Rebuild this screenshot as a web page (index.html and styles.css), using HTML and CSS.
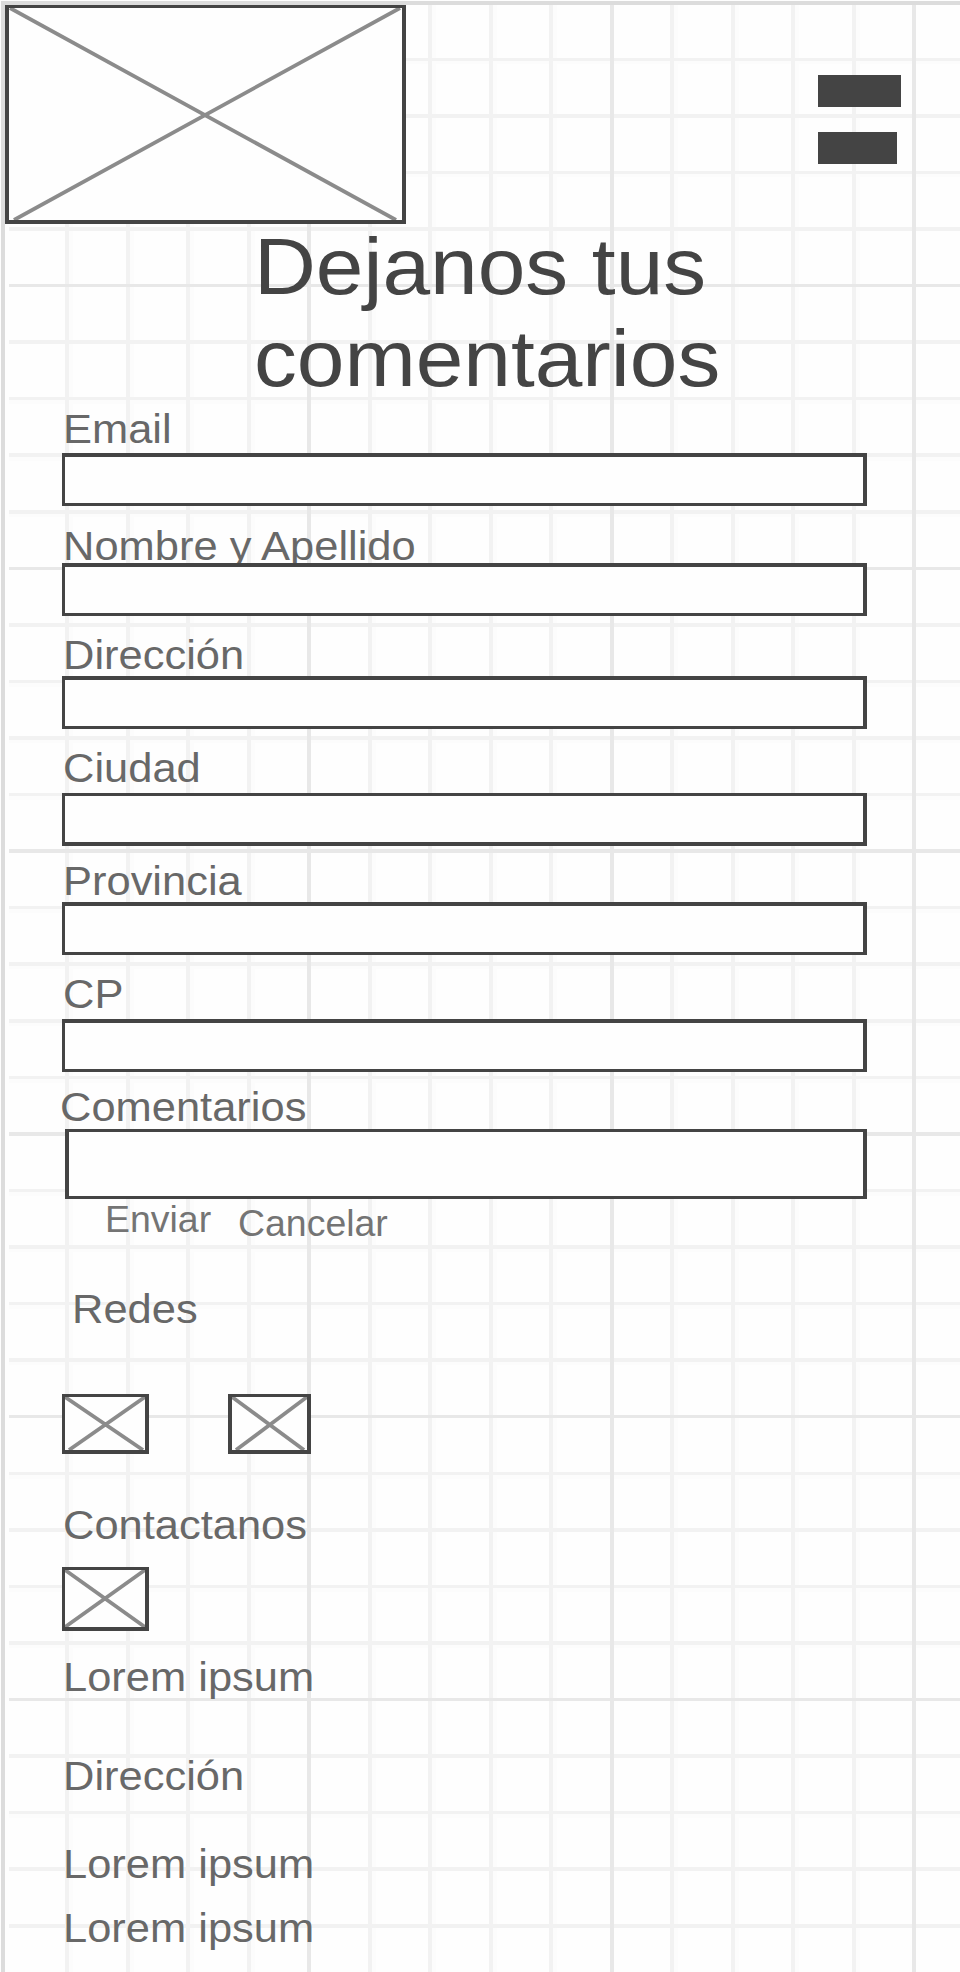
FILE: index.html
```html
<!DOCTYPE html>
<html lang="es">
<head>
<meta charset="utf-8">
<title>Dejanos tus comentarios</title>
<link rel="stylesheet" href="styles.css">
</head>
<body>
<div class="page">
  <svg class="grid" width="960" height="1972" viewBox="0 0 960 1972" shape-rendering="crispEdges" aria-hidden="true">
    <path class="halo" d="M69 5h4v1967h-4zM130 5h4v1967h-4zM190 5h4v1967h-4zM251 5h4v1967h-4zM372 5h4v1967h-4zM432 5h4v1967h-4zM493 5h4v1967h-4zM553 5h4v1967h-4zM674 5h4v1967h-4zM735 5h4v1967h-4zM795 5h4v1967h-4zM856 5h4v1967h-4z"/>
    <path class="halo" d="M9 61h951v3H9zM9 174h951v3H9zM9 400h951v4H9zM9 457h951v4H9zM9 514h951v3H9zM9 683h951v4H9zM9 740h951v3H9zM9 796h951v4H9zM9 909h951v4H9zM9 966h951v3H9zM9 1023h951v3H9zM9 1079h951v4H9zM9 1192h951v4H9zM9 1249h951v3H9zM9 1305h951v4H9zM9 1362h951v3H9zM9 1475h951v4H9zM9 1588h951v4H9zM9 1645h951v3H9zM9 1814h951v4H9z"/>
    <path class="minor" d="M65 5h4v1967h-4zM126 5h4v1967h-4zM186 5h4v1967h-4zM247 5h4v1967h-4zM368 5h4v1967h-4zM428 5h4v1967h-4zM489 5h4v1967h-4zM549 5h4v1967h-4zM670 5h4v1967h-4zM731 5h4v1967h-4zM791 5h4v1967h-4zM852 5h4v1967h-4z"/>
    <path class="minor" d="M9 58h951v3H9zM9 114h951v4H9zM9 171h951v3H9zM9 227h951v4H9zM9 340h951v4H9zM9 397h951v3H9zM9 453h951v4H9zM9 510h951v4H9zM9 623h951v4H9zM9 680h951v3H9zM9 736h951v4H9zM9 793h951v3H9zM9 906h951v3H9zM9 962h951v4H9zM9 1019h951v4H9zM9 1076h951v3H9zM9 1189h951v3H9zM9 1245h951v4H9zM9 1302h951v3H9zM9 1358h951v4H9zM9 1472h951v3H9zM9 1528h951v4H9zM9 1585h951v3H9zM9 1641h951v4H9zM9 1754h951v4H9zM9 1811h951v3H9zM9 1867h951v4H9zM9 1924h951v4H9z"/>
    <path class="major" d="M9 284h951v3H9zM9 567h951v3H9zM9 849h951v4H9zM9 1132h951v4H9zM9 1415h951v3H9zM9 1698h951v3H9zM307 5h4v1967h-4zM610 5h4v1967h-4zM912 5h4v1967h-4z"/>
    <path class="frame" d="M1 1h959v4H5v1967H1z"/>
  </svg>

  <header class="header">
    <div class="image logo"><svg viewBox="0 0 393 212" preserveAspectRatio="none"><path d="M1 0L387 212M391 0L5 212"/></svg></div>
    <div class="menu"><span class="bar"></span><span class="bar bar-short"></span></div>
  </header>

  <h1 class="title">Dejanos tus<br>comentarios</h1>

  <form class="form">
    <div class="field email"><label class="text">Email</label><div class="box"></div></div>
    <div class="field nombre"><label class="text">Nombre y Apellido</label><div class="box"></div></div>
    <div class="field direccion"><label class="text">Dirección</label><div class="box"></div></div>
    <div class="field ciudad"><label class="text">Ciudad</label><div class="box box-low"></div></div>
    <div class="field provincia"><label class="text">Provincia</label><div class="box"></div></div>
    <div class="field cp"><label class="text">CP</label><div class="box"></div></div>
    <div class="field comentarios"><label class="text">Comentarios</label><div class="box box-area"></div></div>
    <div class="actions"><span class="action">Enviar</span><span class="action cancel">Cancelar</span></div>
  </form>

  <footer class="footer">
    <div class="text redes">Redes</div>
    <div class="socials">
      <div class="image"><svg viewBox="0 0 80 53" preserveAspectRatio="none"><path d="M0 0L78 53M80 0L4 53"/></svg></div>
      <div class="image second"><svg viewBox="0 0 75 53" preserveAspectRatio="none"><path d="M0 0L72 53M75 0L4 53"/></svg></div>
    </div>
    <div class="text contact">Contactanos</div>
    <div class="image mail"><svg viewBox="0 0 80 57" preserveAspectRatio="none"><path d="M0 0L80 57M80 0L0 57"/></svg></div>
    <div class="text phone">Lorem ipsum</div>
    <div class="text address">Dirección</div>
    <div class="text line-one">Lorem ipsum</div>
    <div class="text line-two">Lorem ipsum</div>
  </footer>
</div>
</body>
</html>
```

FILE: styles.css
```css
* { box-sizing: border-box; }

body {
  margin: 0;
  background: #fefefe;
  font-family: "Liberation Sans", Arial, sans-serif;
  color: #444;
}

.page {
  position: relative;
  width: 960px;
  height: 1972px;
  overflow: hidden;
  padding-top: 5px;
}

/* Canvas grid behind the content */
.grid { position: absolute; left: 0; top: 0; z-index: -1; }
.halo { fill: #fcfcfc; }
.minor { fill: #f2f2f2; }
.major { fill: #e8e8e8; }
.frame { fill: #dcdcdc; }

.header {
  display: flex;
  justify-content: space-between;
  align-items: flex-start;
  height: 215px;
  padding: 0 59px 0 5px;
}

.image {
  width: 87px;
  height: 60px;
  border: solid #444;
  border-width: 3px 4px 4px 3px;
  background: #fefefe;
}
.image svg { display: block; width: 100%; height: 100%; }
.image path { fill: none; stroke: #444; stroke-opacity: .62; stroke-width: 3.8; }

.logo { width: 401px; height: 219px; border-left-width: 4px; }

.menu {
  display: flex;
  flex-direction: column;
  gap: 25px;
  width: 83px;
  padding-top: 70px;
}
.bar { height: 32px; background: #444; }
.bar-short { width: 79px; }

.title {
  width: 500px;
  height: 184px;
  margin: 1px 0 -1px 254px;
  font-size: 80px;
  font-weight: 400;
  line-height: 92px;
  transform: scaleX(1.07);
  transform-origin: left;
}

.form { padding: 2px 93px 0 62px; }

.text {
  display: block;
  width: max-content;
  height: 46px;
  margin-left: 1px;
  font-size: 41px;
  line-height: 46px;
  white-space: nowrap;
  color: #686868;
  transform: scaleX(1.06);
  transform-origin: left;
}

.field .text { height: 40px; }

.box {
  position: relative;
  z-index: 1;
  height: 53px;
  border: solid #444;
  border-width: 4px 4px 3px 3px;
  background: #fefefe;
}
.box-low { border-width: 3px 4px 4px 3px; }
.box-area { height: 70px; margin-left: 3px; border-width: 3px 4px 3px 4px; }

.field { display: flex; flex-direction: column; margin-top: 16px; }
.email { gap: 7px; margin-top: 0; }
.nombre { margin-top: 17px; }
.direccion, .provincia { gap: 4px; }
.ciudad, .cp { gap: 8px; }
.provincia { margin-top: 12px; }
.comentarios { gap: 5px; margin-top: 12px; }
.comentarios .text { margin-left: -2px; }

.actions {
  display: flex;
  gap: 31px;
  height: 46px;
  padding: 2px 0 0 43px;
}
.action {
  font-size: 36px;
  line-height: 38px;
  color: #747474;
  transform: scaleX(1.04);
  transform-origin: left;
}
.cancel { margin-top: 4px; }

.footer { padding: 41px 0 0 62px; }
.redes { margin-left: 10px; }
.socials { display: flex; gap: 79px; margin-top: 62px; }
.second { width: 83px; border-left-width: 4px; }
.contact { margin-top: 48px; }
.mail { height: 64px; margin-top: 19px; }
.phone { margin-top: 23px; }
.address { margin-top: 53px; }
.line-one { margin-top: 42px; }
.line-two { margin-top: 18px; }
```
